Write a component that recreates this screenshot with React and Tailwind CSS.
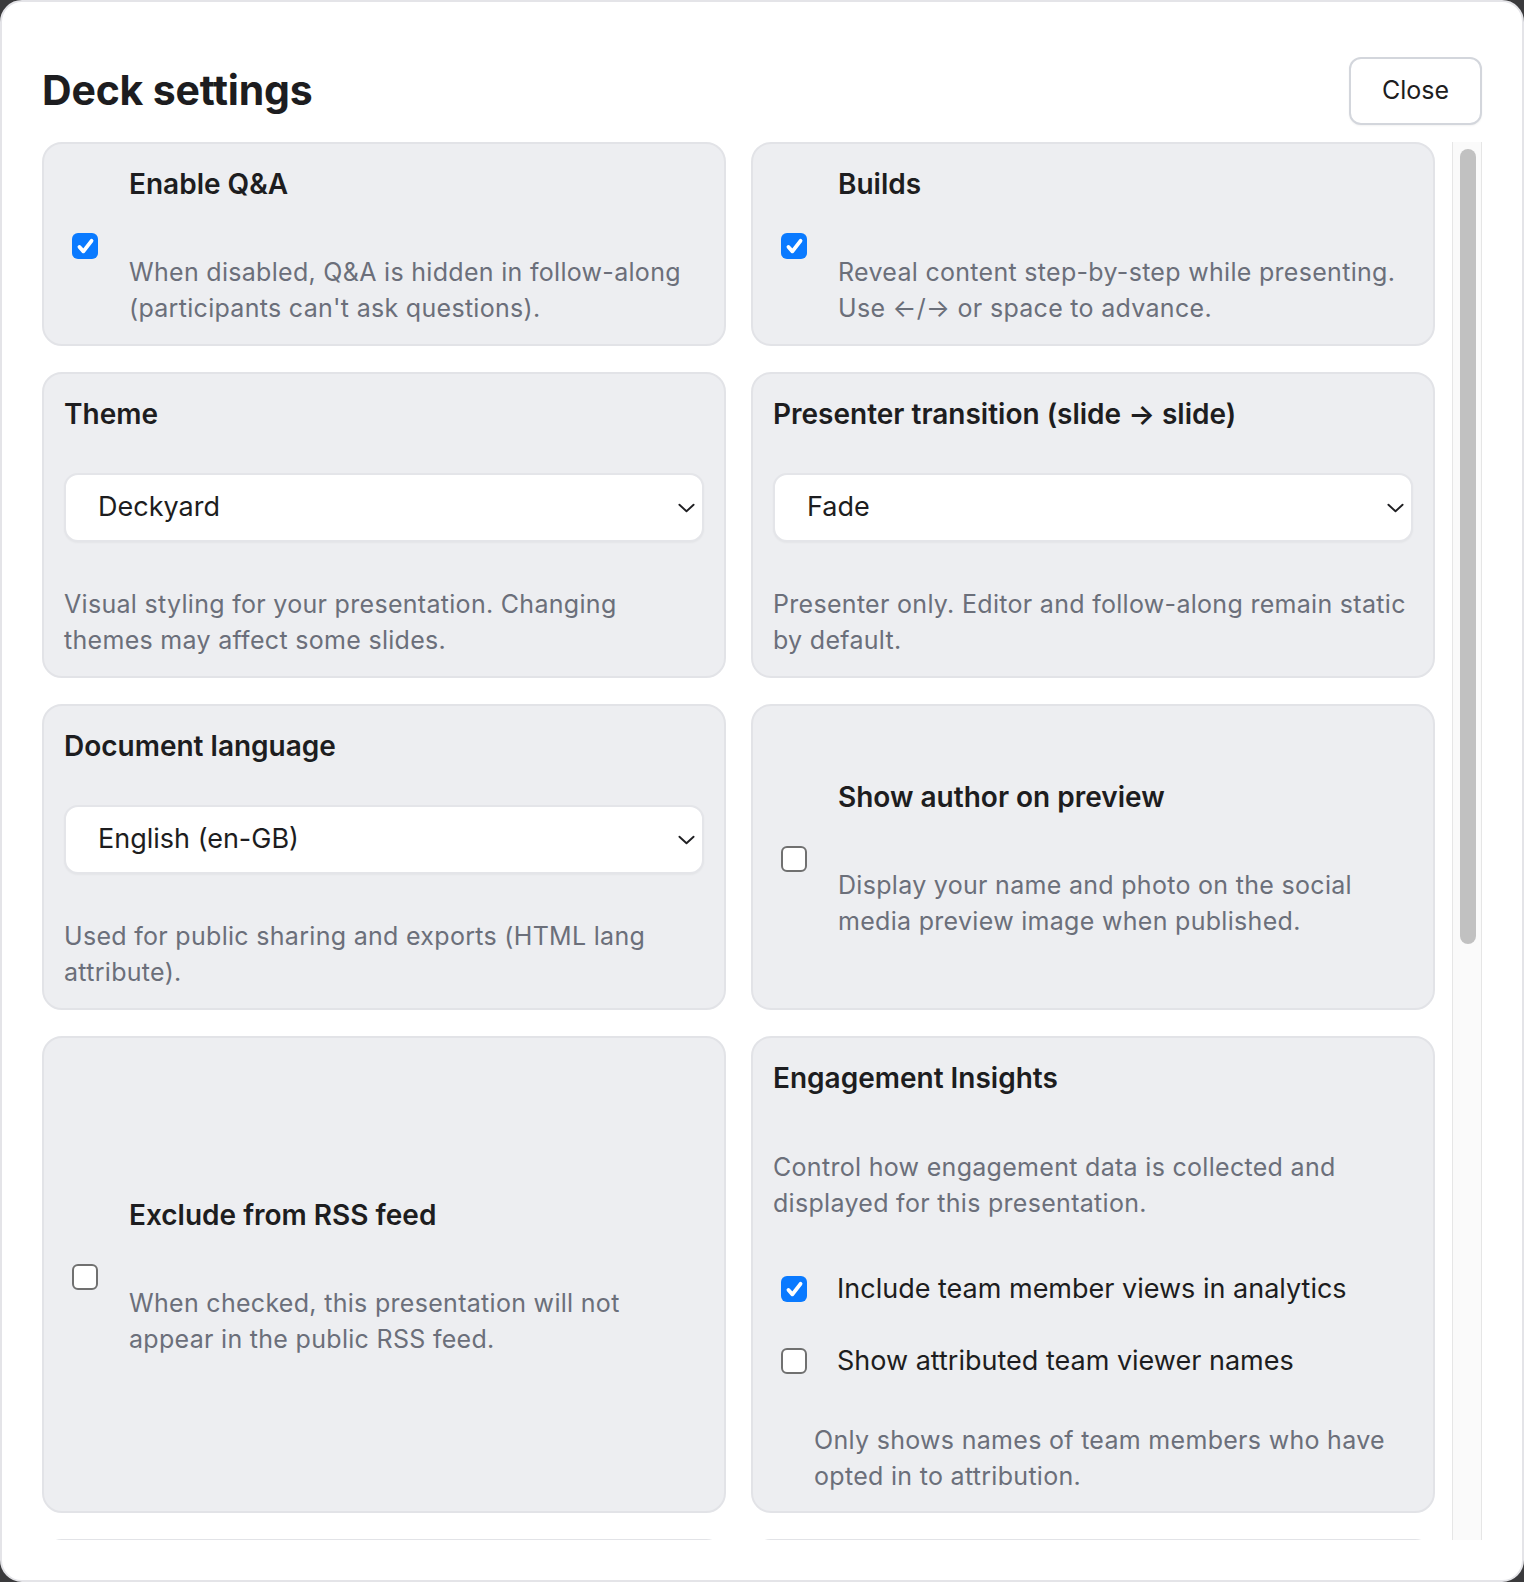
import React from "react";

const font = { fontFamily: "Inter, 'Noto Sans', sans-serif" };

function Checkbox({ checked }) {
  if (checked) {
    return (
      <span className="inline-flex h-[26px] w-[26px] shrink-0 items-center justify-center rounded-[6px] bg-[#0a7aff]">
        <svg viewBox="0 0 16 16" className="h-[21px] w-[21px]">
          <path d="M3.4 8.4l3 3.3 6.2-8" fill="none" stroke="white" strokeWidth="2.9" strokeLinecap="round" strokeLinejoin="round" />
        </svg>
      </span>
    );
  }
  return <span className="inline-block h-[26px] w-[26px] shrink-0 rounded-[6px] border-2 border-[#707070] bg-white" />;
}

function Chevron() {
  return (
    <svg viewBox="0 0 18 10" className="h-[10px] w-[17px]">
      <path d="M1.5 1.5l7.5 7 7.5-7" fill="none" stroke="#1f1f22" strokeWidth="2" strokeLinecap="round" strokeLinejoin="round" />
    </svg>
  );
}

const cardBase = "rounded-[20px] border-2 border-[#e2e3e7] bg-[#edeef1] px-5";
const titleCls = "text-[28px] font-semibold leading-9 text-[#1d1d20]";
const descCls = "text-[25px] tracking-[0.3px] leading-9 text-[#6b6f7a]";

function CheckCard({ checked, title, children }) {
  return (
    <div className={`${cardBase} flex items-center pb-[18px] pt-[22px]`}>
      <div className="ml-2 mr-[31px] flex">
        <Checkbox checked={checked} />
      </div>
      <div>
        <div className={titleCls}>{title}</div>
        <p className={`mt-[52px] ${descCls}`}>{children}</p>
      </div>
    </div>
  );
}

function SelectCard({ title, value, children }) {
  return (
    <div className={`${cardBase} pb-[18px] pt-[22px]`}>
      <div className={titleCls}>{title}</div>
      <div className="mt-[41px] flex h-[69px] items-center justify-between rounded-[14px] border-2 border-[#e4e5e9] bg-white pl-8 pr-[7px] shadow-[0_1px_2px_rgba(0,0,0,0.04)]">
        <span className="text-[27px] text-[#1d1d20]">{value}</span>
        <Chevron />
      </div>
      <p className={`mt-[44px] ${descCls}`}>{children}</p>
    </div>
  );
}

function Option({ checked, label }) {
  return (
    <div className="flex h-9 items-center">
      <div className="ml-2 mr-[30px] flex">
        <Checkbox checked={checked} />
      </div>
      <span className="text-[27px] leading-9 text-[#1d1d20]">{label}</span>
    </div>
  );
}

export default function App() {
  return (
    <div className="min-h-screen bg-[#3a3a3c]" style={font}>
      <div className="flex h-[1582px] w-full flex-col overflow-hidden rounded-[22px] border-2 border-[#e4e4e8] bg-white px-10 pb-10 pt-[55px]">
        <header className="mb-[17px] flex h-[68px] shrink-0 items-center justify-between">
          <h1 className="text-[41px] font-bold tracking-[-0.2px] text-[#1d1d20]">Deck settings</h1>
          <button className="h-[68px] w-[133px] rounded-[12px] border-2 border-[#d3d6dc] bg-white text-[25px] text-[#1d1d20] shadow-[0_1px_2px_rgba(0,0,0,0.05)]">
            Close
          </button>
        </header>

        <div className="flex min-h-0 flex-1">
          <div className="min-w-0 flex-1 overflow-hidden pr-[17px]">
            <div className="grid grid-cols-2 gap-x-[25px] gap-y-[26px]">
              <CheckCard checked title="Enable Q&A">
                When disabled, Q&amp;A is hidden in follow-along
                <br />
                (participants can't ask questions).
              </CheckCard>
              <CheckCard checked title="Builds">
                Reveal content step-by-step while presenting.
                <br />
                Use ←/→ or space to advance.
              </CheckCard>

              <SelectCard title="Theme" value="Deckyard">
                Visual styling for your presentation. Changing
                <br />
                themes may affect some slides.
              </SelectCard>
              <SelectCard title="Presenter transition (slide → slide)" value="Fade">
                Presenter only. Editor and follow-along remain static
                <br />
                by default.
              </SelectCard>

              <SelectCard title="Document language" value="English (en-GB)">
                Used for public sharing and exports (HTML lang
                <br />
                attribute).
              </SelectCard>
              <CheckCard title="Show author on preview">
                Display your name and photo on the social
                <br />
                media preview image when published.
              </CheckCard>

              <CheckCard title="Exclude from RSS feed">
                When checked, this presentation will not
                <br />
                appear in the public RSS feed.
              </CheckCard>
              <div className={`${cardBase} pb-[17px] pt-[22px]`}>
                <div className={titleCls}>Engagement Insights</div>
                <p className={`mt-[53px] ${descCls}`}>
                  Control how engagement data is collected and
                  <br />
                  displayed for this presentation.
                </p>
                <div className="mt-[50px] flex flex-col gap-9">
                  <Option checked label="Include team member views in analytics" />
                  <Option label="Show attributed team viewer names" />
                </div>
                <p className={`mt-[43px] pl-[41px] ${descCls}`}>
                  Only shows names of team members who have
                  <br />
                  opted in to attribution.
                </p>
              </div>

              <div className={`${cardBase} h-[200px]`} />
              <div className={`${cardBase} h-[200px]`} />
            </div>
          </div>
          <div className="w-[30px] shrink-0 border-x border-[#e6e6e6] bg-[#fafafa] pl-[7px] pr-[5px] pt-[7px]">
            <div className="h-[795px] w-4 rounded-full bg-[#c1c1c1]" />
          </div>
        </div>
      </div>
    </div>
  );
}
